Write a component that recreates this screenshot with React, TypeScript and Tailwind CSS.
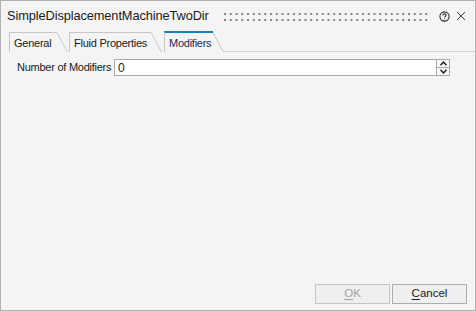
import React from 'react'

const font = {fontFamily: '"Liberation Sans", Arial, sans-serif'}

function Slant() {
    return (
        <svg width="11" height="20" className="shrink-0" viewBox="0 0 11 20">
            <line x1="0" y1="0.5" x2="10.5" y2="20" stroke="#c6c6c6" strokeWidth="1"/>
        </svg>
    )
}

function Tab({label, active, width}: {label: string, active?: boolean, width: string}) {
    return (
        <div className="flex items-end shrink-0">
            <div
                className={`${width} flex items-center pl-[4px] border-l border-[#c6c6c6] whitespace-nowrap ${active ? 'h-[21px] border-t-2 border-t-[#1580b4] text-[#1c2b55]' : 'h-[20px] border-t text-[#1a1a1a]'}`}>
                <span className="text-[11px] tracking-[-0.25px] leading-none pt-[1px]">{label}</span>
            </div>
            <Slant/>
        </div>
    )
}

function Grip() {
    return (
        <svg className="w-full min-w-0 h-[10px] block" height="10">
            <defs>
                <pattern id="grip" width="5.75" height="6" patternUnits="userSpaceOnUse">
                    <rect x="0" y="1" width="2" height="2" fill="#858585"/>
                </pattern>
            </defs>
            <rect width="100%" height="10" fill="url(#grip)"/>
        </svg>
    )
}

export default function App() {
    return (
        <div className="w-[476px] h-[311px] bg-[#f4f4f4] border border-[#b1b1b1] flex flex-col overflow-hidden" style={font}>
            <div className="h-[30px] flex items-center pl-[6px] pr-[9px] shrink-0">
                <span className="text-[12.8px] text-[#1a1a1a] tracking-[-0.1px] whitespace-nowrap">SimpleDisplacementMachineTwoDir</span>
                <div className="flex-1 min-w-0 flex items-center ml-[15px] mr-[8px] pt-[1px]">
                    <Grip/>
                </div>
                <svg width="11" height="11" viewBox="0 0 11 11" className="mr-[6px] shrink-0">
                    <circle cx="5.5" cy="5.5" r="4.6" fill="none" stroke="#2e2e2e" strokeWidth="1.1"/>
                    <path d="M3.9 4.4 C3.9 3.4 4.6 2.9 5.5 2.9 C6.4 2.9 7.1 3.4 7.1 4.3 C7.1 5.3 5.6 5.4 5.6 6.5"
                          fill="none" stroke="#2e2e2e" strokeWidth="1.1"/>
                    <rect x="5.1" y="7.4" width="1" height="1" fill="#2e2e2e"/>
                </svg>
                <svg width="10" height="10" viewBox="0 0 10 10" className="shrink-0">
                    <path d="M1 1 L9 9 M9 1 L1 9" stroke="#3a3a3a" strokeWidth="1"/>
                </svg>
            </div>
            <div className="flex items-end pl-[8px] h-[21px] shrink-0">
                <Tab label="General" width="w-[48px]"/>
                <div className="w-[1px] shrink-0"/>
                <Tab label="Fluid Properties" width="w-[82px]"/>
                <div className="w-[2px] shrink-0"/>
                <Tab label="Modifiers" width="w-[49px]" active/>
                <div className="flex-1 border-b border-[#d6d6d6]"/>
            </div>
            <div className="flex-1 flex flex-col px-[8px] pt-[7px]">
                <div className="flex items-center h-[17px]">
                    <span className="text-[11px] tracking-[-0.25px] text-[#1a1a1a] pl-[8px] w-[105px] shrink-0 whitespace-nowrap">Number of Modifiers</span>
                    <div className="flex-1 h-[17px] bg-white border border-[#a9a9a9] flex items-center pl-[3px]">
                        <span className="text-[12px] text-[#1a1a1a]">0</span>
                    </div>
                    <div className="w-[13px] h-[17px] flex flex-col border border-l-0 border-[#a9a9a9] bg-[#f7f7f7]">
                        <div className="flex-1 flex items-center justify-center border-b border-[#a9a9a9]">
                            <svg width="7" height="5" viewBox="0 0 7 5">
                                <path d="M0.5 4.2 L3.5 1 L6.5 4.2" fill="none" stroke="#1a1a1a" strokeWidth="1.4"/>
                            </svg>
                        </div>
                        <div className="flex-1 flex items-center justify-center">
                            <svg width="7" height="5" viewBox="0 0 7 5">
                                <path d="M0.5 0.8 L3.5 4 L6.5 0.8" fill="none" stroke="#1a1a1a" strokeWidth="1.4"/>
                            </svg>
                        </div>
                    </div>
                    <div className="w-[17px] shrink-0"/>
                </div>
                <div className="flex-1"/>
                <div className="flex justify-end gap-[2px] pb-[6px]">
                    <button className="w-[75px] h-[20px] bg-[#efefef] border border-[#c4c4c4] text-[11.5px] text-[#a3a3a3] flex items-center justify-center">
                        <span><span className="underline underline-offset-2">O</span>K</span>
                    </button>
                    <button className="w-[75px] h-[20px] bg-[#efefef] border border-[#adadad] text-[11.5px] text-[#1a1a1a] flex items-center justify-center">
                        <span><span className="underline underline-offset-2">C</span>ancel</span>
                    </button>
                </div>
            </div>
        </div>
    )
}
